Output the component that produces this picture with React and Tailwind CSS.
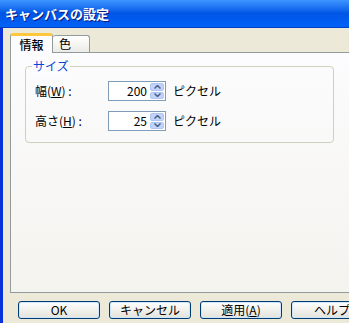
import React from 'react'

const font = { fontFamily: '"Noto Sans CJK JP", "Liberation Sans", sans-serif' }

function Spinner({ value }) {
  return (
    <div className="flex h-[20px] w-[58px] border border-[#7F9DB9] bg-white">
      <div className="flex flex-1 items-center justify-end pr-[3px] text-[12px] text-black">{value}</div>
      <div className="flex w-[15px] flex-col gap-px py-px pr-px">
        <div className="flex flex-1 items-center justify-center rounded-[2px] bg-[#C1D3FB] border border-[#AFC5F5]">
          <svg width="7" height="4" viewBox="0 0 7 4"><path d="M0.5 3.5 L3.5 0.5 L6.5 3.5" stroke="#4D6185" strokeWidth="1.5" fill="none" /></svg>
        </div>
        <div className="flex flex-1 items-center justify-center rounded-[2px] bg-[#C1D3FB] border border-[#AFC5F5]">
          <svg width="7" height="4" viewBox="0 0 7 4"><path d="M0.5 0.5 L3.5 3.5 L6.5 0.5" stroke="#4D6185" strokeWidth="1.5" fill="none" /></svg>
        </div>
      </div>
    </div>
  )
}

function Button({ children }) {
  return (
    <div className="flex h-[18px] w-[82px] shrink-0 items-center justify-center rounded-[3px] border border-[#003C74] bg-gradient-to-b from-white to-[#E3E2DA] text-[12px] text-black shadow-[inset_0_0_0_1px_#CEE7FF]">
      {children}
    </div>
  )
}

export default function App() {
  return (
    <div className="h-[323px] w-[349px] overflow-hidden bg-[#0831D9]" style={font}>
      {/* title bar */}
      <div className="flex h-[28px] items-center bg-gradient-to-b from-[#3D95FF] via-[#0055E5] to-[#0062F8] pl-[5px] border-b border-[#0040C0]">
        <span className="text-[13px] font-bold text-white [text-shadow:1px_1px_#0A1883]">キャンバスの設定</span>
      </div>
      {/* body */}
      <div className="ml-[3px] flex h-[295px] flex-col bg-[#ECE9D8] pl-[7px] pt-[5px]">
        {/* tabs */}
        <div className="flex h-[19px] items-end">
          <div className="relative z-10 mb-[-1px] flex h-[20px] w-[43px] items-center justify-center rounded-t-[3px] border-x border-[#919B9C] border-t-[3px] border-t-[#FFC83C] bg-[#FCFCFE] text-[12px] font-medium text-black">
            情報
          </div>
          <div className="flex h-[17px] w-[37px] items-center justify-start rounded-t-[3px] border-r border-t border-[#919B9C] bg-gradient-to-b from-white to-[#ECEBE6] pl-[6px] text-[12px] text-black">
            色
          </div>
        </div>
        {/* panel */}
        <div className="flex h-[241px] flex-col border-l border-t border-b border-[#919B9C] bg-gradient-to-b from-[#FCFCFE] to-[#F4F3EE] pl-[14px] pt-[13px]">
          <div className="relative h-[77px] w-[309px] rounded-[4px] border border-[#D0D0BF]">
            <span className="absolute left-[6px] top-[-9px] bg-[#FCFCFE] px-[1px] text-[12px] leading-[16px] text-[#0046D5]">サイズ</span>
            <div className="flex flex-col gap-[10px] pl-[9px] pt-[14px]">
              <div className="flex items-center">
                <span className="w-[73px] text-[12px] text-black">幅(<span className="underline">W</span>) :</span>
                <Spinner value="200" />
                <span className="ml-[7px] text-[12px] text-black">ピクセル</span>
              </div>
              <div className="flex items-center">
                <span className="w-[73px] text-[12px] text-black">高さ(<span className="underline">H</span>) :</span>
                <Spinner value="25" />
                <span className="ml-[7px] text-[12px] text-black">ピクセル</span>
              </div>
            </div>
          </div>
        </div>
        {/* buttons */}
        <div className="flex gap-[9px] pl-[8px] pt-[8px]">
          <Button>OK</Button>
          <Button>キャンセル</Button>
          <Button>適用(<span className="underline">A</span>)</Button>
          <Button>ヘルプ</Button>
        </div>
      </div>
    </div>
  )
}
